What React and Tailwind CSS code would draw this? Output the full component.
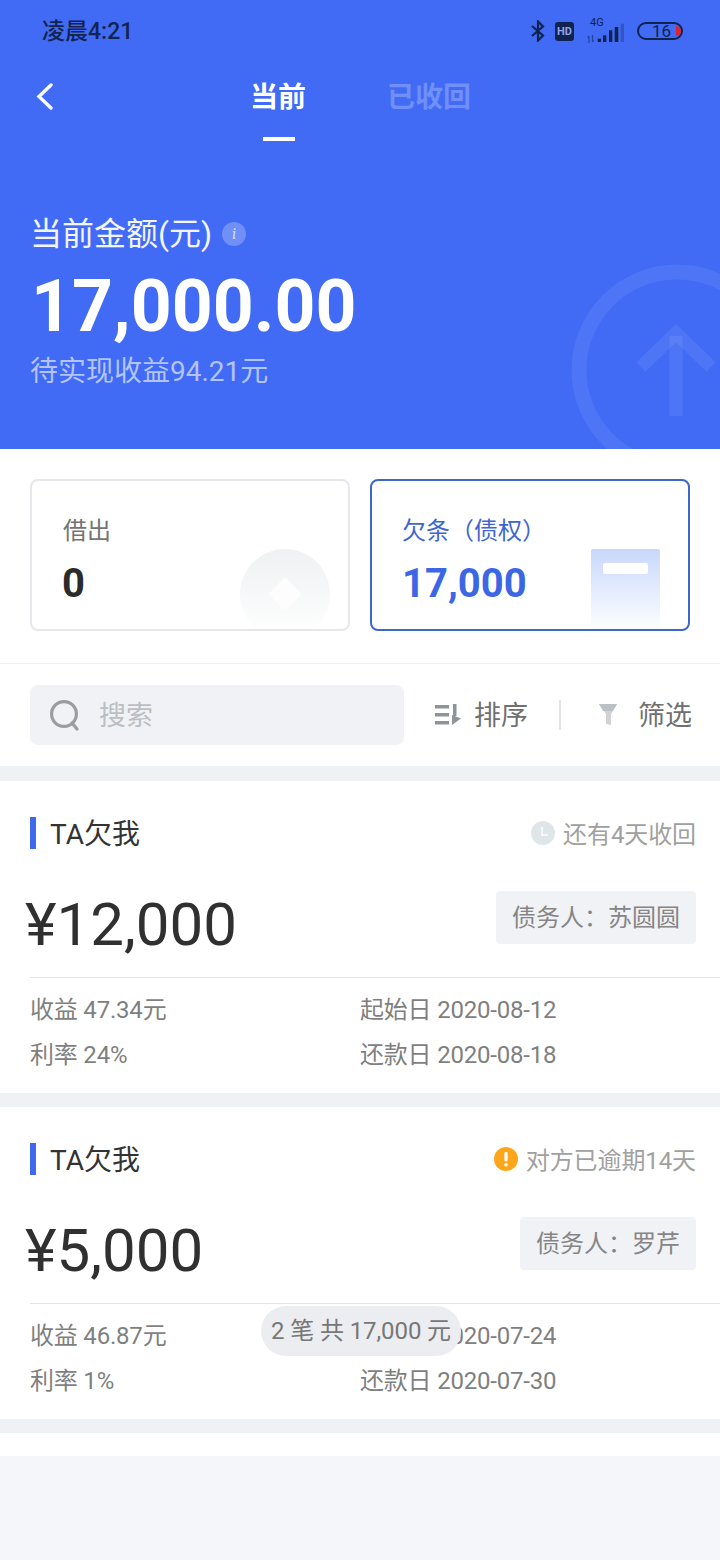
import React from "react";

const Bluetooth = () => (
  <svg width="14" height="22" viewBox="0 0 14 22" fill="none" stroke="#10234f" strokeWidth="2.2">
    <path d="M1 6 L12 15.5 L7 20.5 V1.5 L12 6.5 L1 16" />
  </svg>
);

const Signal = () => (
  <svg width="38" height="26" viewBox="0 0 38 26" fill="#10234f">
    <path d="M2 25 V18 M2 18 L0.8 20 M5.5 17 V24 M5.5 24 L6.7 22" stroke="#10234f" strokeOpacity=".55" strokeWidth="1.2" fill="none" />
    <rect x="10.7" y="20.7" width="3.3" height="3.3" />
    <rect x="16" y="17.3" width="3.3" height="6.7" />
    <rect x="22" y="12.3" width="3.3" height="11.7" />
    <rect x="27.7" y="9" width="3.6" height="15" />
    <rect x="33.7" y="5.7" width="3.3" height="18.3" opacity=".3" />
  </svg>
);

const Search = () => (
  <svg width="32" height="34" viewBox="0 0 32 34" fill="none" stroke="#9a9c9f" strokeWidth="3.2">
    <circle cx="15" cy="16" r="12.4" />
    <path d="M23 25 L28 31" strokeLinecap="round" />
  </svg>
);

const Sort = () => (
  <svg width="27" height="22" viewBox="0 0 27 22" fill="#8e939c">
    <rect x="0" y="1" width="14" height="3.5" />
    <rect x="0" y="9" width="14" height="3.5" />
    <rect x="0" y="17" width="14" height="3.5" />
    <rect x="18" y="0" width="3.5" height="12" />
    <path d="M17 11 L26 14.5 L17 21 Z" />
  </svg>
);

const Funnel = () => (
  <svg width="18" height="22" viewBox="0 0 18 22">
    <path d="M0 0 H18 L12 10 V21 L7 20 V10 Z" fill="#d0d2d5" />
    <path d="M0 0 H18 L14 7 H4 Z" fill="#bcbfc3" />
  </svg>
);

const Clock = () => (
  <svg width="24" height="24" viewBox="0 0 24 24">
    <circle cx="12" cy="12" r="12" fill="#dfe6e8" />
    <path d="M11 6 V14 H17" fill="none" stroke="#f5f7f8" strokeWidth="2" />
  </svg>
);

const Warn = () => (
  <svg width="24" height="24" viewBox="0 0 24 24">
    <circle cx="12" cy="12" r="12" fill="#fca61c" />
    <rect x="10.4" y="5" width="3.2" height="9.5" rx="1.4" fill="#fff" />
    <circle cx="12" cy="17.8" r="1.8" fill="#fff" />
  </svg>
);

const loans = [
  {
    icon: <Clock />,
    note: "还有4天收回",
    amount: "¥12,000",
    debtor: "债务人\uFF1A苏圆圆",
    profit: "收益 47.34元",
    start: "起始日 2020-08-12",
    rate: "利率 24%",
    due: "还款日 2020-08-18",
  },
  {
    icon: <Warn />,
    note: "对方已逾期14天",
    amount: "¥5,000",
    debtor: "债务人\uFF1A罗芹",
    profit: "收益 46.87元",
    start: "起始日 2020-07-24",
    rate: "利率 1%",
    due: "还款日 2020-07-30",
  },
];

const LoanCard = ({ loan }) => (
  <div className="h-[326px] bg-white pt-[36px] pl-[30px] border-b-[14px] border-[#eff2f5] box-border">
    <div className="flex items-center justify-between pr-[24px] h-[32px]">
      <div className="flex items-center">
        <div className="w-[6px] h-[32px] bg-[#3f69ee]"></div>
        <span className="ml-[14px] pt-[4px] text-[28px] leading-[32px] text-[#333]">TA欠我</span>
      </div>
      <div className="flex items-center gap-[8px] text-[24px] leading-[32px] tracking-[-0.1px] text-[#a0a0a0]">
        {loan.icon}
        <span className="pt-[4px]">{loan.note}</span>
      </div>
    </div>

    <div className="flex items-start justify-between pr-[24px] mt-[42px] h-[53px]">
      <span className="-ml-[5px] mt-[4px] text-[60px] leading-[60px] text-[#303030]">{loan.amount}</span>
      <span className="h-[53px] leading-[55px] px-[16px] rounded-[4px] bg-[#f0f2f5] text-[24px] text-[#858585]">
        {loan.debtor}
      </span>
    </div>

    <div className="h-px bg-[#e3e5e8] mt-[33px]"></div>

    <div className="grid grid-cols-[330px_1fr] mt-[10px] text-[24px] leading-[45px] tracking-[-0.2px] text-[#7f7f7f]">
      <span>{loan.profit}</span>
      <span>{loan.start}</span>
      <span>{loan.rate}</span>
      <span>{loan.due}</span>
    </div>
  </div>
);

export default function App() {
  return (
    <div
      className="relative w-[720px] h-[1560px] overflow-hidden bg-[#f5f6fa]"
      style={{ fontFamily: 'Roboto, "Noto Sans CJK SC", sans-serif' }}
    >
      {/* header */}
      <section className="relative h-[449px] bg-[#416bf5] overflow-hidden">
        <svg className="absolute left-[560px] top-[250px]" width="160" height="199" viewBox="560 250 160 199" fill="none" stroke="#fff" strokeOpacity="0.07">
          <circle cx="677" cy="370" r="98" strokeWidth="15" />
          <path d="M641 367 L676 333 L711 367" strokeWidth="13" />
          <path d="M676 336 V416" strokeWidth="13" />
        </svg>

        <div className="relative flex items-center justify-between h-[62px] pl-[42px] pr-[37px]">
          <span className="pt-[2px] text-[23px] font-medium text-[#12244f]">凌晨4:21</span>
          <div className="flex items-center">
            <Bluetooth />
            <span className="ml-[10px] w-[19px] h-[19px] rounded-[3px] bg-[#10234f] text-[11px] leading-[19px] font-bold text-center text-[#8fa6ee]">HD</span>
            <div className="relative ml-[13px] w-[38px] h-[26px]">
              <Signal />
              <span className="absolute -top-[1px] left-[3px] text-[11px] leading-[12px] text-[#10234f]">4G</span>
            </div>
            <div className="flex items-center ml-[12px] w-[46px] h-[18px] rounded-full border-2 border-[#10234f] pl-[13px]">
              <span className="text-[17px] leading-[16px] text-[#10234f]">16</span>
              <span className="ml-[5px] w-[6px] h-[10px] rounded-r-full bg-[#e0242f]"></span>
            </div>
          </div>
        </div>

        <div className="relative h-[80px]">
          <svg className="absolute left-[36px] top-[21px]" width="17" height="27" viewBox="0 0 17 27" fill="none" stroke="#fff" strokeWidth="3.4" strokeLinecap="round">
            <path d="M15 2 L3 13.5 L15 25" />
          </svg>
          <div className="absolute left-[250px] top-[18px] flex flex-col items-center">
            <span className="text-[28px] leading-[36px] font-bold text-white">当前</span>
            <span className="ml-[2px] mt-[21px] w-[32px] h-[4px] bg-white"></span>
          </div>
          <span className="absolute left-[387px] top-[18px] text-[28px] leading-[36px] font-bold text-white/25">已收回</span>
        </div>

        <div className="relative mt-[70px] pl-[30px]">
          <div className="flex items-center">
            <span className="text-[32px] leading-[44px] text-[#f2f5fe]">当前金额(元)</span>
            <span className="ml-[10px] w-[24px] h-[24px] rounded-full bg-white/25 text-[16px] leading-[24px] italic text-center font-serif text-white/70">i</span>
          </div>
          <div className="ml-[1px] mt-[11px] text-[71.5px] leading-[80px] font-bold text-white">17,000.00</div>
          <div className="mt-[7px] text-[28px] leading-[36px] text-[#b3c4fb]">待实现收益94.21元</div>
        </div>
      </section>

      {/* top cards */}
      <section className="bg-white h-[215px] pt-[30px] border-b border-[#eff0f3] box-border">
        <div className="flex gap-[20px] px-[30px]">
          <div className="relative w-[320px] h-[152px] overflow-hidden rounded-[8px] border-2 border-[#e6e7ea] pl-[31px] pt-[32px]">
            <div className="text-[24px] leading-[36px] text-[#747474]">借出</div>
            <div className="-ml-px mt-[11px] text-[40px] leading-[48px] font-bold text-[#2b2b2b]">0</div>
            <div className="absolute left-[208px] top-[68px] w-[90px] h-[90px] rounded-full bg-gradient-to-b from-[#eff1f2] to-white"></div>
            <div className="absolute left-[241px] top-[101px] w-[24px] h-[24px] rotate-45 rounded-[3px] bg-[#fdfdfd]"></div>
          </div>
          <div className="relative w-[320px] h-[152px] overflow-hidden rounded-[8px] border-2 border-[#3f66c9] pl-[31px] pt-[32px]">
            <div className="-ml-px text-[24px] leading-[36px] text-[#3f66d0]">{"欠条\uFF08债权\uFF09"}</div>
            <div className="-ml-px mt-[11px] text-[40px] leading-[48px] font-bold text-[#3c67e4]">17,000</div>
            <div className="absolute left-[219px] top-[68px] w-[69px] h-[82px] rounded-t-[2px] bg-gradient-to-b from-[#c8d7fb] to-[#ffffff]"></div>
            <div className="absolute left-[231px] top-[82px] w-[45px] h-[11px] rounded-[2px] bg-white"></div>
          </div>
        </div>
      </section>

      {/* search bar */}
      <section className="bg-white h-[117px] pt-[21px] pl-[30px] border-b-[15px] border-[#eff2f5] flex items-start box-border">
        <div className="flex items-center w-[374px] h-[60px] rounded-[8px] bg-[#f0f2f5] pl-[19px]">
          <Search />
          <span className="ml-[18px] pt-[3px] text-[27px] text-[#bcbec1]">搜索</span>
        </div>
        <div className="flex items-center h-[60px] ml-[31px]">
          <Sort />
          <span className="ml-[12px] pt-[3px] text-[27px] text-[#707070]">排序</span>
          <span className="ml-[31px] w-[2px] h-[30px] bg-[#e3e4e6]"></span>
          <span className="ml-[38px]"><Funnel /></span>
          <span className="ml-[21px] pt-[3px] text-[27px] text-[#707070]">筛选</span>
        </div>
      </section>

      {/* list */}
      {loans.map((loan) => (
        <LoanCard key={loan.amount} loan={loan} />
      ))}
      <div className="h-[23px] bg-white"></div>

      {/* count pill */}
      <div className="absolute left-[261px] top-[1306px] w-[200px] h-[50px] rounded-full bg-[#ebedf0] text-center text-[24px] leading-[50px] tracking-[-0.1px] text-[#777] whitespace-nowrap">
        2 笔 共 17,000 元
      </div>
    </div>
  );
}
